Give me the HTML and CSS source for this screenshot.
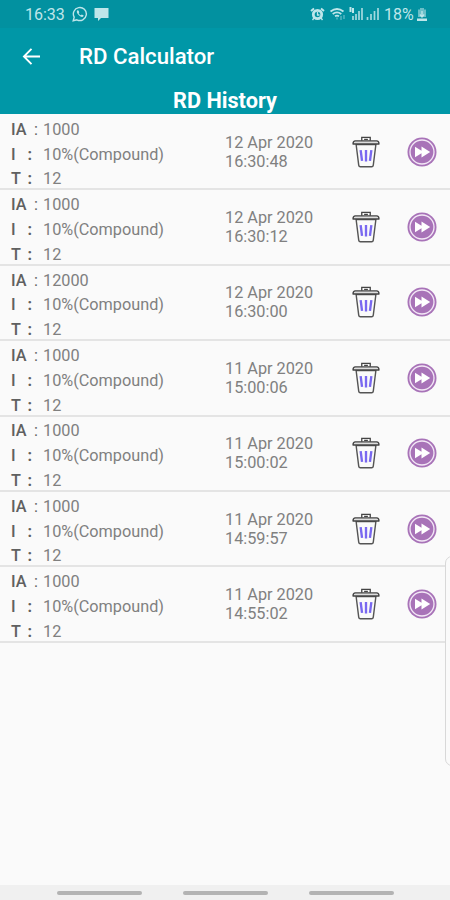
FILE: index.html
```html
<!DOCTYPE html>
<html lang="en">
<head>
    <meta charset="UTF-8">
    <meta name="viewport" content="width=device-width, initial-scale=1.0">
    <title>RD Calculator</title>
    <link rel="stylesheet" href="styles.css">
</head>
<body>
    <!-- Icons used by every history row -->
    <svg class="hidden">
        <symbol id="trash" viewBox="0 0 30 34">
            <path d="M10.5 5V1.500h9V5M13 3.500h4" fill="none" stroke="#444" stroke-width="1.4"/>
            <path d="M4.500 9l2.800 22.200q.2 1.500 1.700 1.500h12q1.500 0 1.700-1.500L25.500 9z" fill="#fafafa" stroke="#555" stroke-width="1.5"/>
            <path d="M1.200 8.500q0-3.300 2.500-3.300h22.600q2.500 0 2.500 3.300z" fill="#ddd" stroke="#444" stroke-width="1.4" stroke-linejoin="round"/>
            <path d="M9.300 15l1.500 11.500M15 15v12M20.700 15l-1.500 11.500" fill="none" stroke="#7968f0" stroke-width="2.5"/>
        </symbol>
        <symbol id="forward" viewBox="0 0 30 30">
            <circle cx="15" cy="15" r="14.500" fill="#a873b8"/>
            <circle cx="15" cy="15" r="12" fill="none" stroke="#f3e8f6" stroke-width="1.300"/>
            <path d="M8 9.800l6.500 4V9.500l8.700 5.500-8.700 5.500v-4.300l-6.500 4z" fill="#fff"/>
        </symbol>
    </svg>

    <header>
        <div class="status-bar">
            <span class="clock">16:33</span>
            <svg class="whatsapp" viewBox="0 0 16 16">
                <path d="M1.200 14.800l1-3.600A6.500 6.500 0 1 1 4.900 13.800z" fill="none" stroke="currentColor" stroke-width="1.400"/>
                <path d="M5.400 4.300c-1 .8-.8 2.400.8 4.300 1.700 2 3.800 3 5 2l.5-1.200-1.900-1-.9.900c-1-.4-1.800-1.200-2.200-2.100l.6-.9-.8-1.900z" fill="currentColor"/>
            </svg>
            <svg class="chat" viewBox="0 0 15 14">
                <path d="M.5 1h14v10H7l-3 3v-3H.5z" fill="currentColor"/>
            </svg>
            <svg class="signals" viewBox="0 0 70 14">
                <path d="M1 4l3-2.500M14 4l-3-2.500" stroke="currentColor" stroke-width="2"/>
                <circle cx="7.500" cy="7.500" r="4.200" fill="none" stroke="currentColor" stroke-width="2.800"/>
                <path d="M7.500 5v3h2M4 11l-1.500 2M11 11l1.500 2" fill="none" stroke="currentColor" stroke-width="1.300"/>
                <path d="M20.500 4.500q6.500-5 13 0M22.700 7q4.300-3.200 8.600 0M25 9.200q2-1.300 4 0" fill="none" stroke="currentColor" stroke-width="1.800"/>
                <path d="M27 10.500v2M31 9v4M34 8v4" stroke="currentColor" stroke-width="1.300" opacity=".5"/>
                <path d="M40.500 0v5M43 1v5" stroke="currentColor" stroke-width="2"/>
                <path d="M43 9v4M46 7v6M49 4v9M52 1v12" stroke="currentColor" stroke-width="1.700" opacity=".85"/>
                <path d="M57.500 10v3M61 7v6M64.500 4v9M68 1v12" stroke="currentColor" stroke-width="1.700" opacity=".85"/>
            </svg>
            <span class="percent">18%</span>
            <svg class="battery" viewBox="0 0 10 13">
                <path d="M3 0h4v1.500h2V9H1V1.500h2z" fill="currentColor" opacity=".55"/>
                <path d="M0 10.500h10V13H0z" fill="currentColor"/>
                <path d="M5 3v6M2.800 6.500L5 9l2.200-2.500" fill="none" stroke="currentColor" stroke-width="1.300"/>
            </svg>
        </div>
        <div class="toolbar">
            <svg class="back" viewBox="0 0 20 18">
                <path d="M19 9H2M10 1L2 9l8 8" fill="none" stroke="#fff" stroke-width="2"/>
            </svg>
            <h1>RD Calculator</h1>
        </div>
        <h2>RD History</h2>
    </header>

    <main>
        <div class="row">
            <dl>
                <dt>IA <i>:</i></dt><dd>1000</dd>
                <dt>I <b>:</b></dt><dd>10%(Compound)</dd>
                <dt>T <b>:</b></dt><dd>12</dd>
            </dl>
            <p class="date">12 Apr 2020<br>16:30:48</p>
            <svg class="trash"><use href="#trash"/></svg>
            <svg class="forward"><use href="#forward"/></svg>
        </div>
        <div class="row">
            <dl>
                <dt>IA <i>:</i></dt><dd>1000</dd>
                <dt>I <b>:</b></dt><dd>10%(Compound)</dd>
                <dt>T <b>:</b></dt><dd>12</dd>
            </dl>
            <p class="date">12 Apr 2020<br>16:30:12</p>
            <svg class="trash"><use href="#trash"/></svg>
            <svg class="forward"><use href="#forward"/></svg>
        </div>
        <div class="row">
            <dl>
                <dt>IA <i>:</i></dt><dd>12000</dd>
                <dt>I <b>:</b></dt><dd>10%(Compound)</dd>
                <dt>T <b>:</b></dt><dd>12</dd>
            </dl>
            <p class="date">12 Apr 2020<br>16:30:00</p>
            <svg class="trash"><use href="#trash"/></svg>
            <svg class="forward"><use href="#forward"/></svg>
        </div>
        <div class="row">
            <dl>
                <dt>IA <i>:</i></dt><dd>1000</dd>
                <dt>I <b>:</b></dt><dd>10%(Compound)</dd>
                <dt>T <b>:</b></dt><dd>12</dd>
            </dl>
            <p class="date">11 Apr 2020<br>15:00:06</p>
            <svg class="trash"><use href="#trash"/></svg>
            <svg class="forward"><use href="#forward"/></svg>
        </div>
        <div class="row">
            <dl>
                <dt>IA <i>:</i></dt><dd>1000</dd>
                <dt>I <b>:</b></dt><dd>10%(Compound)</dd>
                <dt>T <b>:</b></dt><dd>12</dd>
            </dl>
            <p class="date">11 Apr 2020<br>15:00:02</p>
            <svg class="trash"><use href="#trash"/></svg>
            <svg class="forward"><use href="#forward"/></svg>
        </div>
        <div class="row">
            <dl>
                <dt>IA <i>:</i></dt><dd>1000</dd>
                <dt>I <b>:</b></dt><dd>10%(Compound)</dd>
                <dt>T <b>:</b></dt><dd>12</dd>
            </dl>
            <p class="date">11 Apr 2020<br>14:59:57</p>
            <svg class="trash"><use href="#trash"/></svg>
            <svg class="forward"><use href="#forward"/></svg>
        </div>
        <div class="row">
            <dl>
                <dt>IA <i>:</i></dt><dd>1000</dd>
                <dt>I <b>:</b></dt><dd>10%(Compound)</dd>
                <dt>T <b>:</b></dt><dd>12</dd>
            </dl>
            <p class="date">11 Apr 2020<br>14:55:02</p>
            <svg class="trash"><use href="#trash"/></svg>
            <svg class="forward"><use href="#forward"/></svg>
        </div>
    </main>

    <!-- Edge panel handle, floats over the list -->
    <div class="edge-handle"></div>

    <footer>
        <span></span>
        <span></span>
        <span></span>
    </footer>
</body>
</html>
```

FILE: styles.css
```css
* {
    box-sizing: border-box;
    margin: 0;
    padding: 0;
}
body {
    position: relative;
    display: flex;
    flex-direction: column;
    height: 900px;
    overflow: hidden;
    background-color: #fafafa;
    color: #808080;
    font-family: Roboto, sans-serif;
    font-size: 16.25px;
}
svg {
    display: block;
    flex: none;
}
.hidden {
    display: none;
}
header {
    height: 114px;
    background-color: #0097a7;
    color: #fff;
}
.status-bar {
    display: flex;
    align-items: center;
    height: 28px;
    padding: 0 23px 0 25px;
    background-color: #0291a0;
    color: #bfe6ea;
    font-size: 16px;
}
.clock {
    width: 47px;
}
.whatsapp {
    width: 16px;
    height: 16px;
}
.chat {
    width: 15px;
    height: 14px;
    margin-left: 6px;
}
.signals {
    width: 70px;
    height: 14px;
    margin-left: auto;
}
.percent {
    width: 33px;
    margin-left: 4px;
    font-size: 16px;
}
.battery {
    width: 10px;
    height: 13px;
}
.toolbar {
    display: flex;
    align-items: center;
    height: 56px;
    padding-left: 22px;
}
.back {
    width: 19px;
    height: 17px;
}
h1 {
    margin-left: 38px;
    font-size: 22.2px;
    font-weight: 500;
}
h2 {
    font-size: 21.7px;
    font-weight: 700;
    line-height: 34px;
    text-align: center;
}
main {
    flex: 1;
    padding-top: 1px;
}
.row {
    display: flex;
    align-items: center;
    height: 75.4px;
    border-bottom: 2px solid #e4e4e4;
}
dl {
    display: grid;
    grid-template-columns: 32px 1fr;
    grid-auto-rows: 24.8px;
    align-items: center;
    width: 214px;
    margin-left: 11px;
    padding-top: 5px;
}
dt {
    display: flex;
    justify-content: space-between;
    padding-right: 11px;
    color: #606060;
    font-weight: 500;
}
dt i {
    margin-right: -6px;
    font-style: normal;
    font-weight: 400;
}
.date {
    width: 126px;
    line-height: 19px;
}
.trash {
    width: 30px;
    height: 32px;
}
.forward {
    width: 30px;
    height: 30px;
    margin-left: 26px;
}
.edge-handle {
    position: absolute;
    top: 556px;
    right: -10px;
    width: 15px;
    height: 210px;
    border: 1.5px solid #d8d8d8;
    border-radius: 7px;
    background-color: #fafafa;
}
footer {
    display: flex;
    justify-content: center;
    gap: 41px;
    height: 15px;
    padding-top: 6px;
    background-color: #f0f0f0;
}
footer span {
    width: 85px;
    height: 4px;
    border-radius: 2px;
    background-color: #b3b3b3;
}
```
